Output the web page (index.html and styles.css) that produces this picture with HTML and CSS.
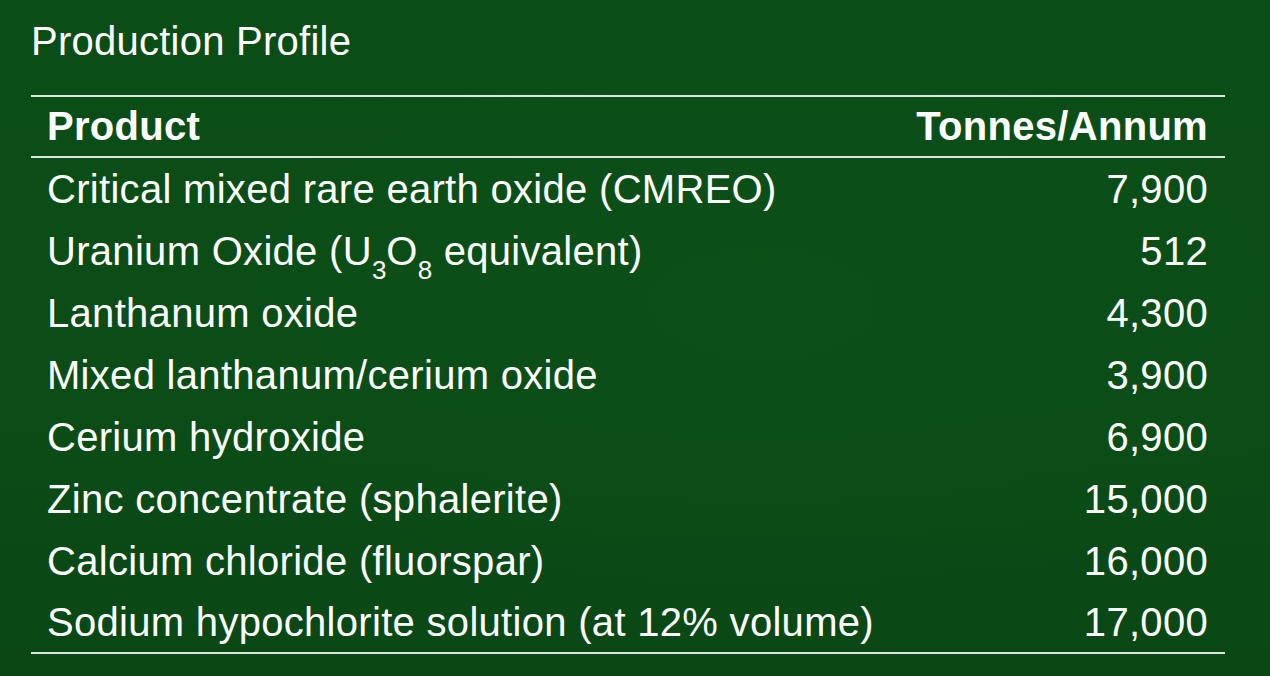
FILE: index.html
```html
<!DOCTYPE html>
<html lang="en">
<head>
<meta charset="utf-8">
<title>Production Profile</title>
<link rel="stylesheet" href="styles.css">
</head>
<body>
<main class="slide">
  <h1 class="title">Production Profile</h1>
  <table class="profile">
    <thead>
      <tr><th class="col-product">Product</th><th class="col-qty">Tonnes/Annum</th></tr>
    </thead>
    <tbody>
      <tr><td>Critical mixed rare earth oxide (CMREO)</td><td class="num">7,900</td></tr>
      <tr><td>Uranium Oxide (U<sub>3</sub>O<sub>8</sub> equivalent)</td><td class="num">512</td></tr>
      <tr><td>Lanthanum oxide</td><td class="num">4,300</td></tr>
      <tr><td>Mixed lanthanum/cerium oxide</td><td class="num">3,900</td></tr>
      <tr><td>Cerium hydroxide</td><td class="num">6,900</td></tr>
      <tr><td>Zinc concentrate (sphalerite)</td><td class="num">15,000</td></tr>
      <tr><td>Calcium chloride (fluorspar)</td><td class="num">16,000</td></tr>
      <tr class="last"><td>Sodium hypochlorite solution (at 12% volume)</td><td class="num">17,000</td></tr>
    </tbody>
  </table>
</main>
</body>
</html>
```

FILE: styles.css
```css
html, body {
  margin: 0;
  padding: 0;
}
body {
  width: 1270px;
  height: 676px;
  overflow: hidden;
  background: #0b4c17;
  background-image:
    radial-gradient(ellipse at 60% 45%, rgba(16, 88, 28, 0.25) 0%, rgba(16, 88, 28, 0) 60%),
    linear-gradient(180deg, #0b4d17 0%, #0b4c17 60%, #0a4715 100%);
  font-family: "Liberation Sans", Arial, sans-serif;
  color: #ffffff;
}
.slide {
  padding: 18px 0 0 31px;
}
.title {
  margin: 0 0 31px 0;
  font-size: 40px;
  line-height: 46px;
  font-weight: normal;
  letter-spacing: 0.25px;
}
.profile {
  width: 1194px;
  border-collapse: separate;
  border-spacing: 0;
  font-size: 40px;
  letter-spacing: 0.3px;
}
.profile th {
  font-weight: bold;
  line-height: 59px;
  padding: 0;
  border-top: 2px solid rgba(240, 244, 240, 0.92);
  border-bottom: 2px solid rgba(240, 244, 240, 0.92);
}
.profile td {
  line-height: 62px;
  padding: 0;
  white-space: nowrap;
}
.profile .col-product,
.profile td:first-child {
  text-align: left;
  padding-left: 16px;
}
.profile .col-qty,
.profile .num {
  text-align: right;
  padding-right: 17px;
}
.profile tr.last td {
  line-height: 60px;
  border-bottom: 2px solid rgba(240, 244, 240, 0.92);
}
.profile sub {
  font-size: 26px;
  line-height: 0;
  vertical-align: -14px;
  letter-spacing: 0;
}
```
